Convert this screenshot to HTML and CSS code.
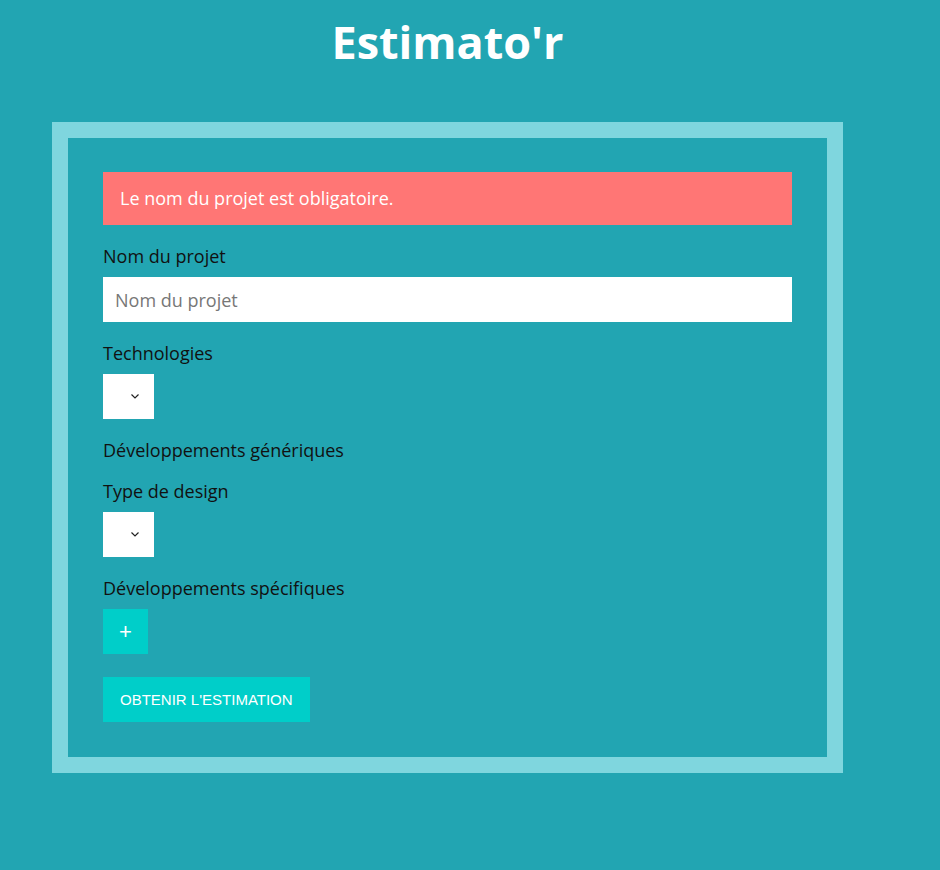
FILE: index.html
```html
<!DOCTYPE html>
<html lang="fr">
<head>
<meta charset="utf-8">
<title>Estimato'r</title>
<link rel="stylesheet" href="styles.css">
</head>
<body>
<div class="container">
  <h1 class="title">Estimato'r</h1>
  <div class="card">
    <form class="form">
      <div class="alert">Le nom du projet est obligatoire.</div>
      <div class="group">
        <label class="label" for="name">Nom du projet</label>
        <input class="input" id="name" type="text" placeholder="Nom du projet">
      </div>
      <div class="group">
        <label class="label">Technologies</label>
        <div class="select">
          <select class="select-field"></select>
          <svg class="chevron" width="8" height="5" viewBox="0 0 8 5"><path d="M0.5 0.5 L4 4 L7.5 0.5" fill="none" stroke="#222" stroke-width="1.2"/></svg>
        </div>
      </div>
      <div class="section">Développements génériques</div>
      <div class="group">
        <label class="label">Type de design</label>
        <div class="select">
          <select class="select-field"></select>
          <svg class="chevron" width="8" height="5" viewBox="0 0 8 5"><path d="M0.5 0.5 L4 4 L7.5 0.5" fill="none" stroke="#222" stroke-width="1.2"/></svg>
        </div>
      </div>
      <div class="group group-last">
        <label class="label">Développements spécifiques</label>
        <button type="button" class="btn-add">+</button>
      </div>
      <button type="button" class="btn-submit">OBTENIR L'ESTIMATION</button>
    </form>
  </div>
</div>
</body>
</html>
```

FILE: styles.css
```css
html, body {
  margin: 0;
  padding: 0;
}
body {
  background: #22a5b2;
  font-family: "Open Sans", "Noto Sans", sans-serif;
  color: #111;
  min-height: 870px;
}
.container {
  width: 791px;
  margin-left: 52px;
}
.title {
  margin: 11px 0 49px;
  font-size: 45px;
  line-height: 62px;
  font-weight: 700;
  color: #fff;
  text-align: center;
}
.card {
  border: 16px solid #7fd6de;
  padding: 34px 35px 35px;
}
.form {
  display: flex;
  flex-direction: column;
  align-items: flex-start;
}
.alert {
  align-self: stretch;
  background: #ff7675;
  color: #fff;
  font-size: 18px;
  line-height: 25px;
  padding: 14px 17px;
  margin-bottom: 20px;
}
.group {
  display: flex;
  flex-direction: column;
  align-items: flex-start;
  align-self: stretch;
  margin-bottom: 20px;
}
.group-last {
  margin-bottom: 23px;
}
.label, .section {
  font-size: 18px;
  line-height: 23px;
  color: #111;
}
.label {
  margin-bottom: 9px;
}
.section {
  margin-bottom: 18px;
}
.input {
  align-self: stretch;
  box-sizing: border-box;
  height: 45px;
  border: none;
  outline: none;
  background: #fff;
  padding: 0 12px;
  font-family: "Open Sans", "Noto Sans", sans-serif;
  font-size: 18px;
  color: #222;
}
.input::placeholder {
  color: #777;
}
.select {
  position: relative;
  width: 51px;
  height: 45px;
  background: #fff;
}
.select-field {
  appearance: none;
  -webkit-appearance: none;
  width: 100%;
  height: 100%;
  border: none;
  background: transparent;
  outline: none;
}
.chevron {
  position: absolute;
  left: 28px;
  top: 20px;
  pointer-events: none;
}
.btn-add {
  width: 45px;
  height: 45px;
  border: none;
  background: #00cec9;
  color: #fff;
  font-family: "Liberation Sans", Arial, sans-serif;
  font-size: 22px;
  line-height: 45px;
  padding: 0;
}
.btn-submit {
  height: 45px;
  border: none;
  background: #00cec9;
  color: #fff;
  font-family: "Liberation Sans", Arial, sans-serif;
  font-size: 15px;
  padding: 0 17px;
}
```
